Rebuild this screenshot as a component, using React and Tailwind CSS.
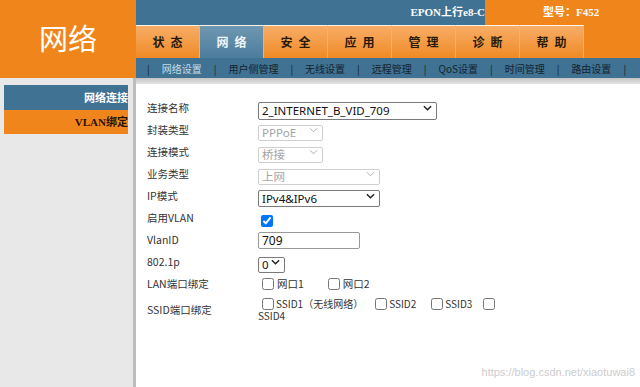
import React from 'react';

const tabs = ['状态', '网络', '安全', '应用', '管理', '诊断', '帮助'];
const subNav = ['网络设置', '用户侧管理', '无线设置', '远程管理', 'QoS设置', '时间管理', '路由设置'];

const cjk = { fontFamily: '"Noto Sans CJK SC", "Noto Sans", sans-serif' };

function Chevron({ disabled }) {
  return (
    <svg
      viewBox="0 0 10 6"
      className="pointer-events-none absolute right-[5px] top-1/2 h-[6px] w-[9px] -translate-y-1/2"
    >
      <path
        d="M1 1 L5 5 L9 1"
        fill="none"
        stroke={disabled ? '#a8a8a8' : '#222'}
        strokeWidth={disabled ? 1 : 1.6}
      />
    </svg>
  );
}

function Select({ value, className, disabled }) {
  return (
    <div className="relative">
      <select
        disabled={disabled}
        defaultValue={value}
        className={`appearance-none rounded-[2px] border bg-white pl-[3px] text-[11.5px] leading-none outline-none ${
          disabled ? 'border-[#cfcfcf] text-[#a3a3a3]' : 'border-[#7a7a7a] text-[#111]'
        } ${className}`}
        style={{ fontFamily: '"Noto Sans", "Noto Sans CJK SC", sans-serif' }}
      >
        <option>{value}</option>
      </select>
      <Chevron disabled={disabled} />
    </div>
  );
}

function Check({ checked, className = '' }) {
  return (
    <input
      type="checkbox"
      defaultChecked={checked}
      className={`m-0 inline-block h-[12px] w-[12px] align-[-2px] accent-[#0075ff] ${className}`}
    />
  );
}

function Row({ label, children }) {
  return (
    <div className="flex h-[22px] items-center">
      <div className="w-[111px] text-[10.5px] text-[#333]">{label}</div>
      <div className="flex items-center">{children}</div>
    </div>
  );
}

export default function App() {
  return (
    <div className="relative flex h-[387px] w-[640px] flex-col overflow-hidden bg-white" style={cjk}>
      {/* Header */}
      <div className="flex h-[78px]">
        <div className="flex w-[136px] items-center justify-center bg-[#f0861b] pb-[2px] text-[29px] text-white">
          网络
        </div>
        <div className="flex flex-1 flex-col">
          <div className="flex h-[24px]">
            <div className="flex flex-1 items-center justify-end bg-[#3f7293] text-[11px] font-bold text-white">
              <span style={{ fontFamily: '"Liberation Serif", "Noto Sans CJK SC", serif' }}>EPON上行e8-C</span>
            </div>
            <div className="flex w-[155px] items-center bg-[#f0861b] pl-[58px] text-[11px] font-bold text-white">
              <span style={{ fontFamily: '"Liberation Serif", "Noto Sans CJK SC", serif' }}>型号：F452</span>
            </div>
          </div>
          <div className="flex h-[34px] bg-[linear-gradient(to_right,#3f7293_349px,#f0861b_349px)]">
            <div className="flex pt-[1px]">
              {tabs.map((t) => (
                <div
                  key={t}
                  className={`flex w-[64px] items-center justify-center border-t border-r border-t-[#fff3e6] border-r-[#f5b070] pl-[6px] text-[12px] font-bold tracking-[6px] ${
                    t === '网络'
                      ? 'border-t-[#9bb8cc] border-r-[#5a86a3] bg-[linear-gradient(#6f97b1,#4b7d9d)] text-[#eef4f8]'
                      : 'bg-[linear-gradient(#f7ad66,#f08a26)] text-[#2a1a0a]'
                  }`}
                >
                  {t}
                </div>
              ))}
            </div>
            <div className="flex-1 bg-[#f0861b]" />
          </div>
          <div className="flex h-[20px] items-center gap-[12px] bg-[#3f7293] pl-[11px] text-[10px] text-[#14232e]">
            <span>|</span>
            {subNav.map((s) => (
              <React.Fragment key={s}>
                <span className={s === '网络设置' ? 'text-[#c9dae6]' : ''}>{s}</span>
                <span>|</span>
              </React.Fragment>
            ))}
          </div>
        </div>
      </div>

      {/* Body */}
      <div className="flex flex-1">
        <aside className="w-[136px] border-r-[3px] border-[#bcbcbc] bg-[#e8e8e8] pl-[4px] pr-[5px] pt-[7px]">
          <div className="flex h-[25px] items-center justify-end overflow-hidden whitespace-nowrap bg-[#3f7293] text-[11px] font-bold text-white">
            网络连接
          </div>
          <div className="flex h-[24px] items-center justify-end overflow-hidden whitespace-nowrap bg-[#f0861b] text-[11px] font-bold text-[#2a1200]">
            <span style={{ fontFamily: '"Liberation Serif", "Noto Sans CJK SC", serif' }}>VLAN绑定</span>
          </div>
        </aside>

        <main className="flex flex-1 flex-col">
          <div className="h-[6px] bg-[linear-gradient(#c4c4c4,#e4e4e4)]" />
          <div className="flex-1 pl-[11px] pt-[13px]">
            <Row label="连接名称">
              <Select value="2_INTERNET_B_VID_709" className="h-[18px] w-[179px]" />
            </Row>
            <Row label="封装类型">
              <Select value="PPPoE" className="h-[16px] w-[65px]" disabled />
            </Row>
            <Row label="连接模式">
              <Select value="桥接" className="h-[16px] w-[65px]" disabled />
            </Row>
            <Row label="业务类型">
              <Select value="上网" className="h-[16px] w-[122px]" disabled />
            </Row>
            <Row label="IP模式">
              <Select value="IPv4&IPv6" className="h-[17px] w-[122px]" />
            </Row>
            <Row label="启用VLAN">
              <span className="pl-[3px]">
                <Check checked />
              </span>
            </Row>
            <Row label="VlanID">
              <input
                defaultValue="709"
                className="h-[17px] w-[102px] rounded-[2px] border border-[#999] px-[3px] text-[12px] leading-none text-[#111] outline-none"
                style={{ fontFamily: '"Noto Sans", sans-serif' }}
              />
            </Row>
            <Row label="802.1p">
              <Select value="0" className="h-[16px] w-[27px]" />
            </Row>
            <Row label="LAN端口绑定">
              <div className="flex items-center pl-[4px] text-[10.5px] text-[#333]">
                <Check />
                <span className="ml-[3px] mr-[24px]">网口1</span>
                <Check />
                <span className="ml-[3px]">网口2</span>
              </div>
            </Row>
            <div className="mt-[3px] flex items-center">
              <div className="w-[111px] text-[10.5px] text-[#333]">SSID端口绑定</div>
              <div className="w-[240px] text-[10px] leading-[11px] text-[#333]">
                <Check className="ml-[4px]" />
                <span className="ml-[2px] mr-[12px]">SSID1（无线网络）</span>
                <Check />
                <span className="ml-[2px] mr-[15px]">SSID2</span>
                <Check />
                <span className="ml-[2px] mr-[11px]">SSID3</span>
                <Check /> SSID4
              </div>
            </div>
          </div>
        </main>
      </div>

      <div
        className="absolute bottom-[7px] right-[5px] text-[11px] text-[#cdcdcd]"
        style={{ fontFamily: '"Liberation Sans", Arial, sans-serif' }}
      >
        https://blog.csdn.net/xiaotuwai8
      </div>
    </div>
  );
}
